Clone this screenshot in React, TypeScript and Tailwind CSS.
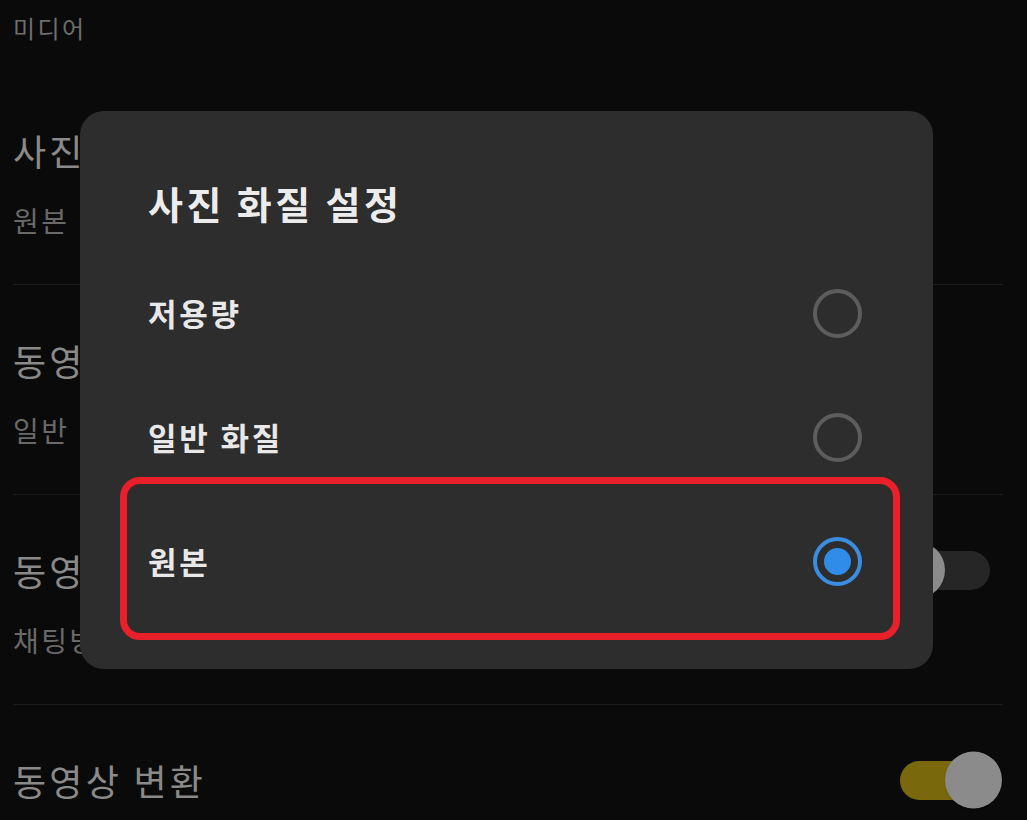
import React from 'react';

const font = { fontFamily: '"Noto Sans CJK KR", "Noto Sans", sans-serif' };

const Toggle: React.FC<{ on: boolean }> = ({ on }) => (
  <div className={`relative mr-[13px] h-[39px] w-[90px] rounded-full ${on ? 'bg-[#7a680c]' : 'bg-[#262626]'}`}>
    <div
      className={`absolute top-1/2 h-[57px] w-[57px] -translate-y-1/2 rounded-full bg-[#8b8b8b] shadow ${on ? 'right-[-12px]' : 'left-[-12px]'}`}
    />
  </div>
);

const Section: React.FC<{ title: string; sub?: string; toggle?: boolean; first?: boolean }> = ({ title, sub, toggle, first }) => (
  <div className={first ? 'pb-[44px]' : 'border-t border-[#1c1c1c] pt-[51px] pb-[44px]'}>
    <div className="flex items-center justify-between">
      <span className="text-[36px] leading-[48px] tracking-[0.09em] text-[#8a8a8a]">{title}</span>
      {toggle !== undefined && <Toggle on={toggle} />}
    </div>
    {sub && <div className="mt-[26px] text-[28px] leading-[40px] tracking-[0.09em] text-[#696969]">{sub}</div>}
  </div>
);

const Radio: React.FC<{ checked: boolean }> = ({ checked }) =>
  checked ? (
    <div className="flex h-[49px] w-[49px] items-center justify-center rounded-full border-[4px] border-[#3a8de0]">
      <div className="h-[27px] w-[27px] rounded-full bg-[#2f8ce8]" />
    </div>
  ) : (
    <div className="h-[49px] w-[49px] rounded-full border-[4px] border-[#5d5d5d]" />
  );

const options = ['저용량', '일반 화질', '원본'];

export default function App() {
  const selected = 2;
  return (
    <div className="relative h-[820px] w-full overflow-hidden bg-[#0a0a0a]" style={font}>
      <div className="pl-[13px] pr-[24px]">
        <div className="pt-[11px] text-[24px] leading-[34px] tracking-[0.1em] text-[#6e6e6e]">미디어</div>
        <div className="pt-[81px]">
          <Section first title="사진 화질" sub="원본" />
          <Section title="동영상 화질" sub="일반" />
          <Section title="동영상 자동 재생" sub="채팅방에서 자동 재생" toggle={false} />
          <Section title="동영상 변환" toggle={true} />
        </div>
      </div>

      {/* dialog */}
      <div className="absolute left-[80px] top-[111px] w-[853px] rounded-[24px] bg-[#2d2d2d] pt-[65px] pb-[46px]">
        <div className="px-[68px] text-[38px] font-bold leading-[53px] tracking-[0.09em] text-[#ececec]">사진 화질 설정</div>
        <div className="mt-[22px]">
          {options.map((o, i) => (
            <div key={o} className="relative flex h-[124px] items-center justify-between pl-[68px] pr-[71px]">
              <span className="text-[31px] font-bold tracking-[0.09em] text-[#e8e8e8]">{o}</span>
              <Radio checked={i === selected} />
              {i === selected && (
                <div className="pointer-events-none absolute left-[40px] right-[33px] top-[-22px] bottom-[-17px] rounded-[20px] border-[7px] border-[#e91f29]" />
              )}
            </div>
          ))}
        </div>
      </div>
    </div>
  );
}
